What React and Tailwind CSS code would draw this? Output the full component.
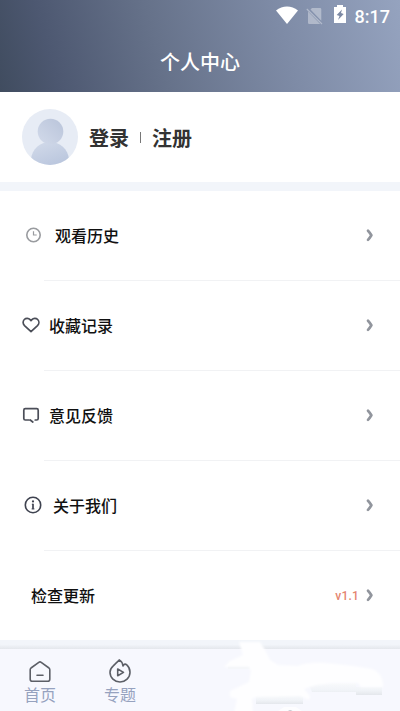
import React from 'react';

const ClockIcon = () => (
    <svg width="15" height="16" viewBox="0 0 15 16" fill="none" stroke="#999b9f" strokeWidth="1.6">
        <circle cx="7.5" cy="8" r="6.7" />
        <path d="M7.5 4.2V8H10.7" strokeWidth="1.2" />
    </svg>
);

const HeartIcon = () => (
    <svg width="18" height="16" viewBox="0 0 18 16" fill="none" stroke="#4b4e58" strokeWidth="1.7" strokeLinejoin="round">
        <path d="M9 14.6L2.5 8.6C.7 6.8 .7 4.1 2.3 2.5 4 .9 6.6 1 8.1 2.6L9 3.6 9.9 2.6C11.4 1 14 .9 15.7 2.5 17.3 4.1 17.3 6.8 15.5 8.6Z" />
    </svg>
);

const FeedbackIcon = () => (
    <svg width="18" height="16" viewBox="0 0 18 16" fill="none" stroke="#4b4e58" strokeWidth="1.7" strokeLinecap="round" strokeLinejoin="round">
        <path d="M7 13H3.3Q1.8 13 1.8 11.5V3.2Q1.8 1.7 3.3 1.7H14.7Q16.2 1.7 16.2 3.2V11.5Q16.2 13 14.7 13H13.2M8.2 13L10.8 15" />
    </svg>
);

const InfoIcon = () => (
    <svg width="18" height="18" viewBox="0 0 18 18" fill="none" stroke="#3f4350" strokeWidth="1.6">
        <circle cx="9" cy="9" r="7.7" />
        <path d="M9 7.8V13.2" strokeWidth="1.7" />
        <path d="M7.8 8.3H9M7.5 12.9H10.5" strokeWidth=".8" />
        <circle cx="9" cy="5.4" r="1.1" fill="#3f4350" stroke="none" />
    </svg>
);

const ChevronIcon = () => (
    <svg width="8" height="14" viewBox="0 0 8 14" fill="none" stroke="#91959d" strokeWidth="2.7" strokeLinecap="round" strokeLinejoin="round">
        <path d="M2 2.7Q3.5 4.200 5.400 7.300 3.500 10.400 2 11.900" />
    </svg>
);

const menuItems = [
    { title: '观看历史', icon: ClockIcon, offset: 'pl-[26px]', gap: 'ml-[14px]' },
    { title: '收藏记录', icon: HeartIcon, offset: 'pl-[22px]', gap: 'ml-[9px]' },
    { title: '意见反馈', icon: FeedbackIcon, offset: 'pl-[22px]', gap: 'ml-[9px]' },
    { title: '关于我们', icon: InfoIcon, offset: 'pl-[24px]', gap: 'ml-[11px]' },
    { title: '检查更新', offset: 'pl-[31px]', gap: '', version: 'v1.1' }
];

const StatusBar = () => (
    <div className="flex h-8 items-center justify-end pr-[10px]">
        <svg width="22" height="18" viewBox="0 0 22 18" className="-mt-[2px] mr-[8px]">
            <path d="M11 18L0 4.500Q5 .6 11 .6T22 4.500Z" fill="#fff" />
        </svg>
        <svg width="17" height="18" viewBox="0 0 17 18" className="mr-[11px]">
            <path d="M6 1H14Q15.300 1 15.300 2.300V13.700L4.500 2.500ZM2 4.500L14.200 17H3.300Q2 17 2 15.700Z" fill="#fff" opacity=".36" />
            <path d="M.8 2L16 17" stroke="#fff" strokeWidth="1.200" opacity=".36" />
        </svg>
        <svg width="12" height="18" viewBox="0 0 12 18" className="-mt-[4px] mr-[9px]">
            <path d="M3 0H9V2H12V18H0V2H3Z" fill="#fff" />
            <path d="M8 4.500L2.700 10 5.500 11 4 15 9.700 9 7 8Z" fill="#7c89a4" />
        </svg>
        <span className="mt-[2px] font-[Roboto] text-[18px] font-medium leading-none text-white">8:17</span>
    </div>
);

const Avatar = () => (
    <svg width="56" height="56" viewBox="0 0 56 56">
        <defs>
            <linearGradient id="head" x1="1" y1="0" x2="0" y2="1">
                <stop offset="0" stopColor="#b9c4da" />
                <stop offset="1" stopColor="#d2daea" />
            </linearGradient>
            <linearGradient id="body" x1="0" y1="0" x2=".6" y2="1">
                <stop offset="0" stopColor="#d3dbea" />
                <stop offset="1" stopColor="#bbc7de" />
            </linearGradient>
            <clipPath id="round">
                <circle cx="28" cy="28" r="28" />
            </clipPath>
        </defs>
        <circle cx="28" cy="28" r="28" fill="#e7ecf5" />
        <path d="M9 56V50C10 40 18 33 28 33S46 40 47 50V56Z" fill="url(#body)" clipPath="url(#round)" />
        <circle cx="28.5" cy="22.5" r="12.8" fill="url(#head)" />
    </svg>
);

const MenuRow = ({ item, last }) => (
    <div className={`relative flex h-[90px] items-center pr-[26px] pb-[2px] ${item.offset}`}>
        {item.icon && <item.icon />}
        <span className={`text-[16px] font-medium leading-6 text-[#111] ${item.gap}`}>{item.title}</span>
        <div className="ml-auto flex items-center">
            {item.version && <span className="mt-[2px] mr-[7px] font-[Roboto] text-[12px] font-medium tracking-[0.2px] text-[#e58570]">{item.version}</span>}
            <ChevronIcon />
        </div>
        {!last && <div className="absolute right-0 bottom-0 left-11 h-px bg-[#f1f2f4]" />}
    </div>
);

// White cloud floating over the tab bar
const Cloud = () => (
    <svg width="180" height="71" viewBox="0 0 180 71" className="absolute right-0 bottom-0">
        <defs>
            <linearGradient id="shade" x1="0" y1="0" x2="0" y2="1">
                <stop offset="0" stopColor="#f8f9fc" />
                <stop offset=".6" stopColor="#f1f4f8" />
                <stop offset="1" stopColor="#e4e7ec" />
            </linearGradient>
            <filter id="soft" x="-10%" y="-10%" width="120%" height="120%">
                <feGaussianBlur stdDeviation=".7" />
            </filter>
            <filter id="edge" x="-10%" y="-10%" width="120%" height="120%">
                <feGaussianBlur stdDeviation="1.2" />
            </filter>
        </defs>
        <g filter="url(#soft)">
            <path d="M88 43H136V47H162V55H136V52H92Z" fill="url(#shade)" />
            <rect x="36" y="54" width="47" height="10" fill="url(#shade)" />
            <rect x="8" y="25" width="22" height="3.5" fill="#f2f4f8" />
        </g>
        <path d="M4 27L10 21 23 15 19 2H40L45 10 50 20 58 25 78 26Q88 22 105 23L134 26 152 29Q163 33 163 47H141L138 43 112 43 96 45 84 49 90 56 89 60 80 56 36 57 32 59 33 73H14L17 59 10 57 10 51 29 42 31 31 29 27Z" fill="#fefeff" filter="url(#edge)" />
        <path d="M58 71L64 67 76 67 82 71Z" fill="#fff" opacity=".7" />
        <path d="M68 71Q70 69.5 72.5 71Z" fill="#b4b7c0" />
    </svg>
);

const TabBar = () => (
    <div className="flex h-[62px] bg-[#f7f8fe]">
        <div className="flex w-20 flex-col items-center pt-[11px]">
            <svg width="22" height="23" viewBox="0 0 22 23" fill="none" stroke="#5c5f67" strokeWidth="1.6" strokeLinejoin="round" strokeLinecap="round">
                <path d="M9.8 2.300Q11 1.400 12.200 2.300L20 8Q20.800 8.700 20.800 9.700V19.300Q20.800 21.300 18.800 21.300H3.200Q1.200 21.300 1.200 19.300V9.700Q1.200 8.700 2 8ZM8 15.200H14" />
            </svg>
            <span className="mt-[-1px] text-[16px] leading-6 text-[#96a2bf]">首页</span>
        </div>
        <div className="flex w-20 flex-col items-center pt-[9px]">
            <svg width="22" height="25" viewBox="0 0 22 25" fill="none" stroke="#5c5f67" strokeWidth="1.6" strokeLinejoin="round">
                <path d="M10.2 1.900C8.500 3.900 6.500 5.500 4.500 7.600 2.300 9.500 1 11.700 1 14.300A10 9.700 0 0 0 21 14.300C21 11 19.500 8.400 17.800 6.900Q16 5.300 14.700 6.900L14 8C13.800 5.500 12.500 3.300 10.200 1.900Z" />
                <path d="M8.7 11V17.800L14.500 14.400Z" />
            </svg>
            <span className="mt-[-1px] text-[16px] leading-6 text-[#96a2bf]">专题</span>
        </div>
    </div>
);

const App = () => {
    return (
        <div className="relative flex h-[711px] w-[400px] flex-col overflow-hidden bg-white font-['Noto_Sans_CJK_SC',sans-serif]">
            <header className="h-[92px] bg-linear-[75deg,#404c5f_0%,#4d5871_14%,#66728a_40%,#7e8ba6_70%,#95a3bf_100%]">
                <StatusBar />
                <h1 className="pt-[15px] text-center text-[20px] font-medium leading-[30px] text-white">个人中心</h1>
            </header>

            {/* Account */}
            <section className="flex h-[90px] items-center pl-[22px] text-[20px] font-bold leading-[30px] text-[#333]">
                <Avatar />
                <span className="mt-[2px] ml-[11px]">登录</span>
                <span className="mx-[11px] h-[11px] w-px bg-[#777]" />
                <span className="mt-[2px]">注册</span>
            </section>
            <div className="h-[9px] bg-[#f2f5fa]" />

            {/* Menu */}
            <main className="h-[449px]">
                {menuItems.map((item, index) => (
                    <MenuRow key={item.title} item={item} last={index === menuItems.length - 1} />
                ))}
            </main>
            <div className="h-[9px] shrink-0 bg-linear-to-b from-[#f2f5fa] from-50% to-[#e4e7ec]" />
            <TabBar />
            <Cloud />
        </div>
    );
};

export default App;
